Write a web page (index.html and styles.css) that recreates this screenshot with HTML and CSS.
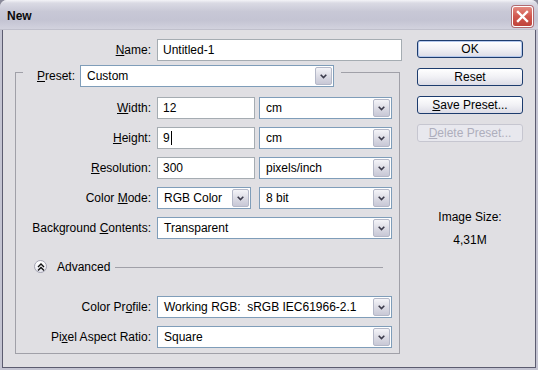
FILE: index.html
```html
<!DOCTYPE html>
<html lang="en">
<head>
    <meta charset="UTF-8">
    <title>New</title>
    <link rel="stylesheet" href="styles.css">
</head>
<body>
    <div class="window">
        <div class="titlebar">
            <span class="title">New</span>
            <div class="close-btn">
                <svg width="13" height="13" viewBox="0 0 13 13"><path d="M2 2 L11 11 M11 2 L2 11" stroke="#fff" stroke-width="2.4" stroke-linecap="square"/></svg>
            </div>
        </div>
        <div class="client">
            <div class="pane">
                <div class="form">
                    <div class="row name-row">
                        <label class="label name-label"><u>N</u>ame:</label>
                        <div class="edit name-edit">Untitled-1</div>
                    </div>

                    <div class="group">
                        <div class="preset-row">
                            <label class="preset-label"><u>P</u>reset:</label>
                            <div class="combo preset-combo">
                                <span class="combo-text">Custom</span>
                                <span class="combo-btn"><svg width="7" height="5" viewBox="0 0 7 5"><path d="M0.7 0.8 L3.5 3.6 L6.3 0.8" fill="none" stroke="#3b3b4b" stroke-width="1.6"/></svg></span>
                            </div>
                        </div>

                        <div class="row first">
                            <label class="label"><u>W</u>idth:</label>
                            <div class="edit num-edit">12</div>
                            <div class="combo unit-combo">
                                <span class="combo-text">cm</span>
                                <span class="combo-btn"><svg width="7" height="5" viewBox="0 0 7 5"><path d="M0.7 0.8 L3.5 3.6 L6.3 0.8" fill="none" stroke="#3b3b4b" stroke-width="1.6"/></svg></span>
                            </div>
                        </div>
                        <div class="row">
                            <label class="label"><u>H</u>eight:</label>
                            <div class="edit num-edit">9<span class="caret"></span></div>
                            <div class="combo unit-combo">
                                <span class="combo-text">cm</span>
                                <span class="combo-btn"><svg width="7" height="5" viewBox="0 0 7 5"><path d="M0.7 0.8 L3.5 3.6 L6.3 0.8" fill="none" stroke="#3b3b4b" stroke-width="1.6"/></svg></span>
                            </div>
                        </div>
                        <div class="row">
                            <label class="label"><u>R</u>esolution:</label>
                            <div class="edit num-edit">300</div>
                            <div class="combo unit-combo">
                                <span class="combo-text">pixels/inch</span>
                                <span class="combo-btn"><svg width="7" height="5" viewBox="0 0 7 5"><path d="M0.7 0.8 L3.5 3.6 L6.3 0.8" fill="none" stroke="#3b3b4b" stroke-width="1.6"/></svg></span>
                            </div>
                        </div>
                        <div class="row">
                            <label class="label">Color <u>M</u>ode:</label>
                            <div class="combo mode-combo">
                                <span class="combo-text">RGB Color</span>
                                <span class="combo-btn"><svg width="7" height="5" viewBox="0 0 7 5"><path d="M0.7 0.8 L3.5 3.6 L6.3 0.8" fill="none" stroke="#3b3b4b" stroke-width="1.6"/></svg></span>
                            </div>
                            <div class="combo unit-combo">
                                <span class="combo-text">8 bit</span>
                                <span class="combo-btn"><svg width="7" height="5" viewBox="0 0 7 5"><path d="M0.7 0.8 L3.5 3.6 L6.3 0.8" fill="none" stroke="#3b3b4b" stroke-width="1.6"/></svg></span>
                            </div>
                        </div>
                        <div class="row">
                            <label class="label">Background <u>C</u>ontents:</label>
                            <div class="combo wide-combo">
                                <span class="combo-text">Transparent</span>
                                <span class="combo-btn"><svg width="7" height="5" viewBox="0 0 7 5"><path d="M0.7 0.8 L3.5 3.6 L6.3 0.8" fill="none" stroke="#3b3b4b" stroke-width="1.6"/></svg></span>
                            </div>
                        </div>

                        <div class="advanced">
                            <span class="adv-btn">
                                <svg width="8" height="8" viewBox="0 0 8 8"><path d="M1 4 L4 1 L7 4 M1 7.5 L4 4.5 L7 7.5" fill="none" stroke="#111" stroke-width="1.4"/></svg>
                            </span>
                            <span class="adv-text">Advanced</span>
                            <span class="adv-line"></span>
                        </div>

                        <div class="row profile-row">
                            <label class="label">Color Pr<u>o</u>file:</label>
                            <div class="combo wide-combo">
                                <span class="combo-text">Working RGB:&nbsp; sRGB IEC61966-2.1</span>
                                <span class="combo-btn"><svg width="7" height="5" viewBox="0 0 7 5"><path d="M0.7 0.8 L3.5 3.6 L6.3 0.8" fill="none" stroke="#3b3b4b" stroke-width="1.6"/></svg></span>
                            </div>
                        </div>
                        <div class="row">
                            <label class="label">Pi<u>x</u>el Aspect Ratio:</label>
                            <div class="combo wide-combo">
                                <span class="combo-text">Square</span>
                                <span class="combo-btn"><svg width="7" height="5" viewBox="0 0 7 5"><path d="M0.7 0.8 L3.5 3.6 L6.3 0.8" fill="none" stroke="#3b3b4b" stroke-width="1.6"/></svg></span>
                            </div>
                        </div>
                    </div>
                </div>

                <div class="side">
                    <button class="btn default">OK</button>
                    <button class="btn">Reset</button>
                    <button class="btn"><u>S</u>ave Preset...</button>
                    <button class="btn disabled"><u>D</u>elete Preset...</button>
                    <div class="size-title">Image Size:</div>
                    <div class="size-value">4,31M</div>
                </div>
            </div>
        </div>
    </div>
</body>
</html>
```

FILE: styles.css
```css
html {
    background: #8a8a9a;
}

body {
    margin: 0;
    padding: 0;
    font-family: 'Liberation Sans', Arial, sans-serif;
    font-size: 12px;
    color: #000;
}

.window {
    width: 538px;
    height: 370px;
    display: flex;
    flex-direction: column;
    background: #e0dfe3;
    border-radius: 7px 7px 0 0;
    overflow: hidden;
}

.titlebar {
    height: 30px;
    flex-shrink: 0;
    display: flex;
    align-items: center;
    padding: 0 5px 0 7px;
    box-sizing: border-box;
    background: linear-gradient(#f4f4f8 0, #dadae4 3px, #c8c8d6 40%, #c4c4d3 70%, #d2d2de 100%);
    border-bottom: 1px solid #c0c0cc;
}

.title {
    font-weight: bold;
    font-size: 12px;
    color: #0a0a0a;
    flex: 1;
    padding-top: 2px;
}

.close-btn {
    width: 19px;
    height: 19px;
    margin-top: 3px;
    margin-right: 0;
    display: flex;
    align-items: center;
    justify-content: center;
    border: 1px solid #fff;
    border-radius: 3px;
    background: linear-gradient(#e48a80, #d0574e 50%, #c0443c);
    box-shadow: 0 0 0 1px #b06a70;
}

.client {
    flex: 1;
    border: 2px solid #c4c4d2;
    border-top: 0;
    display: flex;
}

.pane {
    flex: 1;
    display: flex;
    border: 1px solid #5c5c70;
    border-top: 0;
    background: #e0dfe3;
}

.form {
    width: 399px;
    padding-top: 9px;
}

.row {
    display: flex;
    align-items: center;
    height: 22px;
    margin-top: 8px;
}

.row.first {
    margin-top: 10px;
}

.name-row {
    margin-top: 0;
}

.label {
    width: 135px;
    text-align: right;
    margin-right: 6px;
    white-space: nowrap;
}

.name-label {
    width: 148px;
}

.edit {
    height: 22px;
    box-sizing: border-box;
    border: 1px solid #a5acb2;
    background: #fff;
    padding-left: 5px;
    display: flex;
    align-items: center;
}

.name-edit {
    width: 245px;
}

.num-edit {
    width: 98px;
    margin-right: 4px;
}

.caret {
    display: inline-block;
    width: 1px;
    height: 14px;
    background: #000;
    margin-left: 1px;
}

.combo {
    height: 22px;
    box-sizing: border-box;
    border: 1px solid #7f9db9;
    background: #fff;
    display: flex;
    align-items: stretch;
}

.combo-text {
    flex: 1;
    padding-left: 6px;
    display: flex;
    align-items: center;
    white-space: nowrap;
    overflow: hidden;
}

.combo-btn {
    width: 15px;
    margin: 1px;
    border: 1px solid #b4b8c8;
    border-radius: 2px;
    background: linear-gradient(#f4f4f8, #d8d8e2 60%, #c8c8d6);
    display: flex;
    align-items: center;
    justify-content: center;
}

.preset-combo {
    width: 254px;
}

.unit-combo {
    width: 133px;
}

.mode-combo {
    width: 94px;
    margin-right: 8px;
}

.wide-combo {
    width: 235px;
}

.group {
    margin: 11px 0 0 12px;
    width: 385px;
    box-sizing: border-box;
    border: 1px solid #a0a0a8;
    padding-bottom: 5px;
}

.preset-row {
    display: inline-flex;
    align-items: center;
    height: 22px;
    margin: -8px 0 0 7px;
    padding: 0 7px 0 14px;
    background: #e0dfe3;
    vertical-align: top;
}

.preset-label {
    width: 43px;
}

.advanced {
    display: flex;
    align-items: center;
    height: 17px;
    margin-top: 19px;
    padding-left: 18px;
}

.adv-btn {
    width: 11px;
    height: 11px;
    border: 1px solid #a4a4b4;
    border-radius: 50%;
    background: linear-gradient(#ffffff, #e6e6ee);
    display: flex;
    align-items: center;
    justify-content: center;
}

.adv-text {
    margin-left: 10px;
}

.adv-line {
    flex: 1;
    height: 1px;
    background: #a0a0a8;
    margin: 1px 16px 0 5px;
}

.profile-row {
    margin-top: 21px;
}

.side {
    width: 106px;
    margin-left: 15px;
    padding-top: 10px;
    display: flex;
    flex-direction: column;
    align-items: stretch;
}

.btn {
    height: 18px;
    margin-bottom: 10px;
    padding: 0;
    font-family: 'Liberation Sans', Arial, sans-serif;
    font-size: 12px;
    color: #000;
    border: 1px solid #1d3c6e;
    border-radius: 3px;
    background: linear-gradient(#ffffff, #f1f1f5 50%, #dcdce6);
    line-height: 15px;
}

.btn.default {
    box-shadow: inset 0 0 0 1px #b4c8ec;
}

.btn.disabled {
    color: #aeaebc;
    border-color: #c6c6d0;
    background: #e8e8ee;
}

.size-title {
    margin-top: 58px;
    text-align: center;
    line-height: 14px;
}

.size-value {
    margin-top: 9px;
    text-align: center;
    line-height: 14px;
}
```
